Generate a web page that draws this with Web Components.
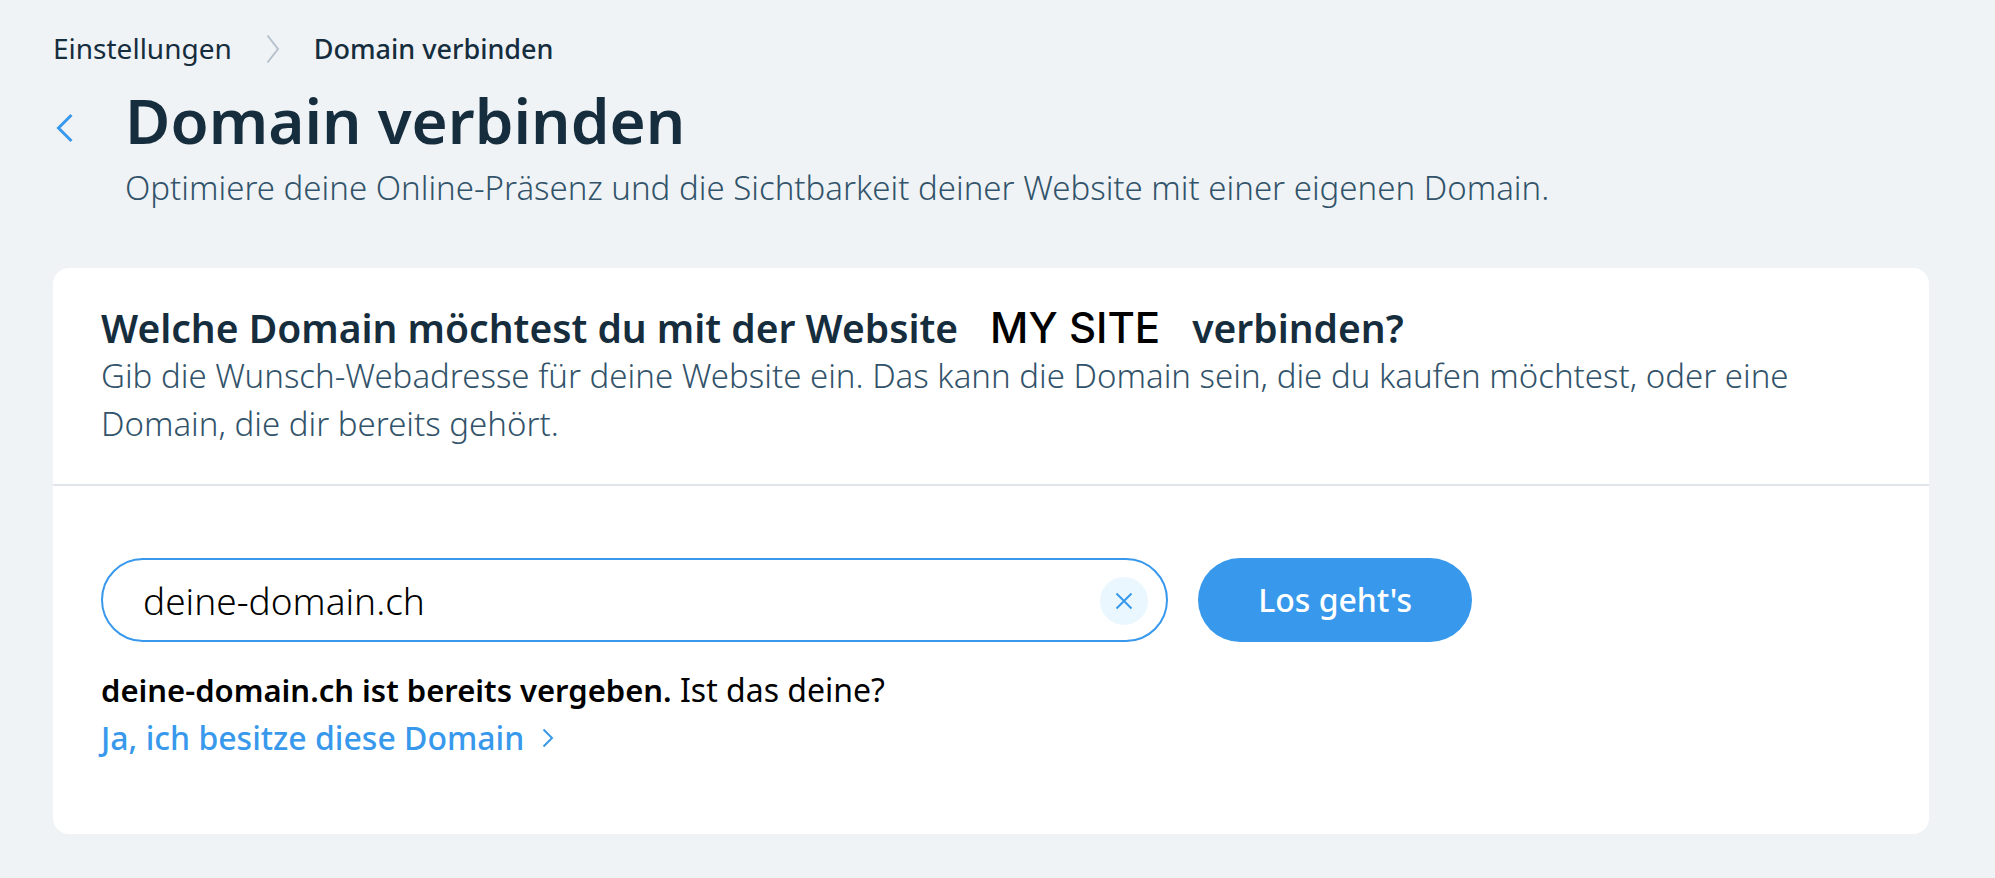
<!DOCTYPE html>
<html lang="de">
<head>
<meta charset="utf-8">
<meta name="viewport" content="width=device-width, initial-scale=1">
<title>Domain verbinden</title>
<style>
  body {
    margin: 0;
    min-height: 100vh;
    background: #eff3f6;
    color: #162d3d;
    font-family: "Noto Sans", "Open Sans", sans-serif;
    --blue: #3899ec;
    --light-blue: #eaf7ff;
    --muted: #32536a;
    --divider: #dfe5eb;
  }
</style>
</head>
<body>
<domain-page>
  <bread-crumbs slot="crumbs" parent="Einstellungen" current="Domain verbinden"></bread-crumbs>
  <page-header slot="header">
    <span slot="title">Domain verbinden</span>
    <span slot="subtitle">Optimiere deine Online-Präsenz und die Sichtbarkeit deiner Website mit einer eigenen Domain.</span>
  </page-header>
  <page-card>
    <card-heading slot="header">
      <span slot="before">Welche Domain möchtest du mit der Website</span>
      <span slot="site">MY SITE</span>
      <span slot="after">verbinden?</span>
      <span slot="text">Gib die Wunsch-Webadresse für deine Website ein. Das kann die Domain sein, die du kaufen möchtest, oder eine Domain, die dir bereits gehört.</span>
    </card-heading>
    <domain-search value="deine-domain.ch">Los geht's</domain-search>
    <domain-status>
      <b slot="result">deine-domain.ch ist bereits vergeben.</b>
      <span slot="question">Ist das deine?</span>
      <span slot="link">Ja, ich besitze diese Domain</span>
    </domain-status>
  </page-card>
</domain-page>

<script>
class DomainPage extends HTMLElement {
  constructor() {
    super();
    this.attachShadow({ mode: 'open' });
    this.shadowRoot.innerHTML = `
      <style>
        :host {
          display: flex;
          flex-direction: column;
          padding: 28px 66px 43px 53px;
        }
        main {
          margin-top: 56px;
        }
      </style>
      <slot name="crumbs"></slot>
      <slot name="header"></slot>
      <main><slot></slot></main>
    `;
  }
}

class BreadCrumbs extends HTMLElement {
  constructor() {
    super();
    this.attachShadow({ mode: 'open' });
    this.shadowRoot.innerHTML = `
      <style>
        :host {
          display: block;
          font-size: 28px;
          line-height: 40px;
        }
        nav {
          display: flex;
          align-items: baseline;
          gap: 34px;
        }
        a {
          color: inherit;
          text-decoration: none;
        }
        a:hover {
          text-decoration: underline;
        }
        .current {
          font-size: 27px;
          font-weight: 500;
        }
        svg {
          display: block;
          flex: none;
          align-self: center;
        }
      </style>
      <nav aria-label="Breadcrumb">
        <a href="#"></a>
        <svg width="14" height="30" viewBox="0 0 14 30" fill="none" stroke="#b6c1cd" stroke-width="2" aria-hidden="true">
          <path d="M1.5 1.5 L12 15 L1.5 28.5"/>
        </svg>
        <span class="current" aria-current="page"></span>
      </nav>
    `;
  }

  connectedCallback() {
    this.shadowRoot.querySelector('a').textContent = this.getAttribute('parent');
    this.shadowRoot.querySelector('.current').textContent = this.getAttribute('current');
  }
}

class PageHeader extends HTMLElement {
  constructor() {
    super();
    this.attachShadow({ mode: 'open' });
    this.shadowRoot.innerHTML = `
      <style>
        :host {
          display: grid;
          grid-template-columns: 20px 1fr;
          column-gap: 52px;
          row-gap: 4px;
          margin-top: 11px;
        }
        button {
          display: flex;
          align-items: center;
          justify-content: center;
          padding: 16px 0 0;
          border: none;
          background: none;
          color: var(--blue);
          cursor: pointer;
        }
        h1 {
          margin: 0;
          font-size: 62px;
          font-weight: 600;
          line-height: 80px;
        }
        p {
          grid-column: 2;
          margin: 0;
          color: var(--muted);
          font-size: 33px;
          font-weight: 300;
          line-height: 48px;
        }
      </style>
      <button type="button" aria-label="Zurück">
        <svg width="20" height="30" viewBox="0 0 20 30" fill="none" stroke="currentColor" stroke-width="3" aria-hidden="true">
          <path d="M18.5 2 L5.5 15 L18.5 28"/>
        </svg>
      </button>
      <h1><slot name="title"></slot></h1>
      <p><slot name="subtitle"></slot></p>
    `;
  }
}

class PageCard extends HTMLElement {
  constructor() {
    super();
    this.attachShadow({ mode: 'open' });
    this.shadowRoot.innerHTML = `
      <style>
        :host {
          display: block;
          border-radius: 16px;
          background: white;
        }
        header {
          padding: 36px 48px;
          border-bottom: 2px solid var(--divider);
        }
        .body {
          display: flex;
          flex-direction: column;
          gap: 24px;
          padding: 72px 48px;
        }
      </style>
      <header><slot name="header"></slot></header>
      <div class="body"><slot></slot></div>
    `;
  }
}

class CardHeading extends HTMLElement {
  constructor() {
    super();
    this.attachShadow({ mode: 'open' });
    this.shadowRoot.innerHTML = `
      <style>
        :host {
          display: block;
          line-height: 48px;
        }
        h2 {
          display: flex;
          flex-wrap: wrap;
          align-items: baseline;
          column-gap: 32px;
          margin: 0;
          font-size: 39px;
          font-weight: 600;
        }
        .site {
          color: black;
          font-family: Inter, sans-serif;
          font-size: 42px;
          font-weight: 500;
        }
        p {
          margin: 0;
          color: var(--muted);
          font-size: 33px;
          font-weight: 300;
        }
      </style>
      <h2>
        <slot name="before"></slot>
        <span class="site"><slot name="site"></slot></span>
        <slot name="after"></slot>
      </h2>
      <p><slot name="text"></slot></p>
    `;
  }
}

class DomainSearch extends HTMLElement {
  constructor() {
    super();
    this.attachShadow({ mode: 'open' });
    this.shadowRoot.innerHTML = `
      <style>
        :host {
          display: block;
          max-width: 1371px;
        }
        form {
          display: flex;
          gap: 30px;
        }
        .field {
          display: flex;
          flex: 1;
          align-items: center;
          box-sizing: border-box;
          height: 84px;
          padding: 2px 18px 0 40px;
          border: 2px solid var(--blue);
          border-radius: 42px;
        }
        input {
          flex: 1;
          min-width: 0;
          padding: 0;
          border: none;
          outline: none;
          background: none;
          color: black;
          font: inherit;
          font-size: 37px;
          font-weight: 300;
          line-height: 48px;
        }
        .clear {
          display: flex;
          flex: none;
          align-items: center;
          justify-content: center;
          width: 48px;
          height: 48px;
          padding: 0;
          border: none;
          border-radius: 50%;
          background: var(--light-blue);
          color: var(--blue);
          cursor: pointer;
        }
        .submit {
          padding: 0 60px;
          border: none;
          border-radius: 42px;
          background: var(--blue);
          color: white;
          font: inherit;
          font-size: 32px;
          font-weight: 500;
          line-height: 48px;
          cursor: pointer;
        }
      </style>
      <form>
        <div class="field">
          <input type="text" aria-label="Domain">
          <button class="clear" type="button" aria-label="Eingabe löschen">
            <svg width="18" height="18" viewBox="0 0 18 18" fill="none" stroke="currentColor" stroke-width="2" aria-hidden="true">
              <path d="M1.5 1.5 L16.5 16.5 M16.5 1.5 L1.5 16.5"/>
            </svg>
          </button>
        </div>
        <button class="submit" type="submit"><slot></slot></button>
      </form>
    `;

    this.input = this.shadowRoot.querySelector('input');
    this.shadowRoot.querySelector('.clear').addEventListener('click', () => {
      this.input.value = '';
      this.input.focus();
    });
    this.shadowRoot.querySelector('form').addEventListener('submit', (event) => {
      event.preventDefault();
      this.dispatchEvent(new CustomEvent('search', { detail: this.input.value }));
    });
  }

  connectedCallback() {
    this.input.value = this.getAttribute('value') || '';
  }
}

class DomainStatus extends HTMLElement {
  constructor() {
    super();
    this.attachShadow({ mode: 'open' });
    this.shadowRoot.innerHTML = `
      <style>
        :host {
          display: block;
          color: black;
          font-size: 32px;
          line-height: 48px;
        }
        p {
          margin: 0;
        }
        ::slotted(b) {
          font-size: 31px;
          font-weight: 600;
        }
        a {
          display: inline-flex;
          align-items: center;
          gap: 18px;
          color: var(--blue);
          font-weight: 500;
          text-decoration: none;
          vertical-align: top;
        }
        a:hover {
          text-decoration: underline;
        }
      </style>
      <p><slot name="result"></slot> <slot name="question"></slot></p>
      <a href="#">
        <slot name="link"></slot>
        <svg width="12" height="20" viewBox="0 0 12 20" fill="none" stroke="currentColor" stroke-width="2" aria-hidden="true">
          <path d="M1.5 1.5 L10 10 L1.5 18.5"/>
        </svg>
      </a>
    `;
  }
}

customElements.define('domain-page', DomainPage);
customElements.define('bread-crumbs', BreadCrumbs);
customElements.define('page-header', PageHeader);
customElements.define('page-card', PageCard);
customElements.define('card-heading', CardHeading);
customElements.define('domain-search', DomainSearch);
customElements.define('domain-status', DomainStatus);
</script>
</body>
</html>
